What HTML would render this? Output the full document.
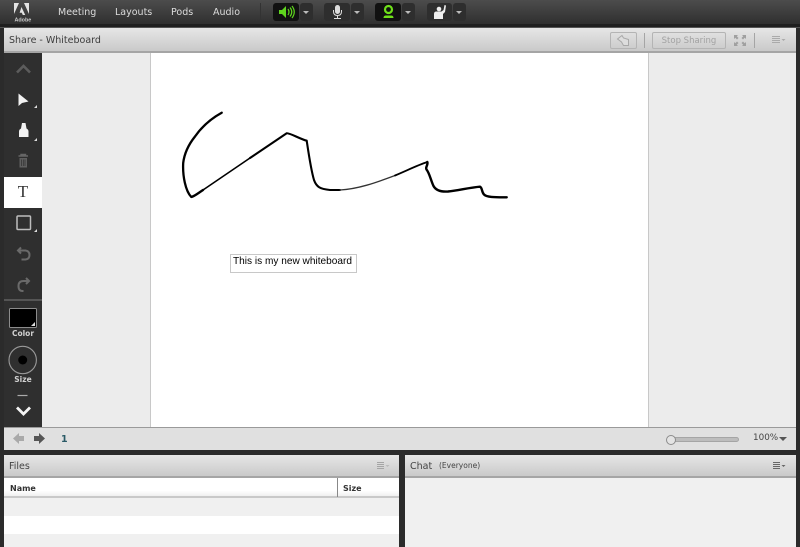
<!DOCTYPE html>
<html><head><meta charset="utf-8">
<style>
*{box-sizing:border-box}
html,body{margin:0;padding:0;width:800px;height:547px;overflow:hidden;background:#2b2b2b;font-family:"DejaVu Sans","Liberation Sans",sans-serif}
#w{position:absolute;left:0;top:0;width:800px;height:547px;overflow:hidden;filter:blur(.3px)}
.a{position:absolute}
.menu{position:absolute;top:6px;font-size:9.500px;line-height:13px;color:#dcdcdc;font-weight:400}
.hd{background:linear-gradient(#e6e6e6,#c9c9c9);border-bottom:2px solid #a5a5a5}
.btn{position:absolute;top:3px;height:18px;background:#2e2e2e;border-radius:3px}
</style></head><body><div id="w">
<div class="a" style="left:0;top:0;width:800px;height:547px;background:#2b2b2b"></div>
<div class="a" style="left:0;top:0;width:800px;height:24px;background:linear-gradient(#4c4c4c,#2f2f2f)"></div>
<div class="a" style="left:0;top:24px;width:800px;height:4px;background:#1f1f1f;border-bottom:1px solid #555"></div>

<svg class="a" style="left:12px;top:1px" width="20" height="22" viewBox="0 0 20 22">
<path d="M2 2h5L2 13zM17 2h-5l5 11zM9.500 6l3.700 8h-2.400l-1-2.200H7.600z" fill="#e4e4e4"/>
<text x="2.500" y="20.500" font-family="Liberation Sans" font-size="5.400" font-weight="bold" fill="#ccc">Adobe</text>
</svg>
<div class="menu" style="left:58px">Meeting</div>
<div class="menu" style="left:115px">Layouts</div>
<div class="menu" style="left:171px">Pods</div>
<div class="menu" style="left:213px">Audio</div>
<div class="a" style="left:260px;top:3px;width:1px;height:18px;background:#333"></div>

<div class="btn" style="left:273px;width:26px;background:#111"></div>
<div class="btn" style="left:300px;width:13px"></div>
<svg class="a" style="left:278px;top:4px" width="18" height="16" viewBox="0 0 18 16">
<path d="M1 6h3l4-4v12l-4-4H1z" fill="#5fd51e"/>
<path d="M10 5q2 3 0 6M12 3.500q3.500 4.500 0 9M14 2q4.500 6 0 12" fill="none" stroke="#5fd51e" stroke-width="1.200"/>
</svg>
<div class="a" style="left:303px;top:11px;border:3px solid transparent;border-top:3px solid #bbb;border-bottom:0"></div>

<div class="btn" style="left:324px;width:26px"></div>
<div class="btn" style="left:351px;width:13px"></div>
<svg class="a" style="left:331px;top:4px" width="13" height="16" viewBox="0 0 13 16">
<rect x="4" y="1" width="5" height="9" rx="2.500" fill="#ddd"/>
<path d="M2.500 6v1.500q0 4 4 4t4-4V6M6.500 11.500V14M3 14.500h7" fill="none" stroke="#ddd" stroke-width="1"/>
</svg>
<div class="a" style="left:354px;top:11px;border:3px solid transparent;border-top:3px solid #bbb;border-bottom:0"></div>

<div class="btn" style="left:375px;width:26px;background:#111"></div>
<div class="btn" style="left:402px;width:13px"></div>
<svg class="a" style="left:381px;top:4px" width="15" height="16" viewBox="0 0 15 16">
<circle cx="7.500" cy="5.500" r="3.500" fill="none" stroke="#6fe01a" stroke-width="2.200"/>
<path d="M2.500 14q0-2.500 2.500-2.500h5q2.500 0 2.500 2.500z" fill="#6fe01a"/>
</svg>
<div class="a" style="left:405px;top:11px;border:3px solid transparent;border-top:3px solid #bbb;border-bottom:0"></div>

<div class="btn" style="left:427px;width:25px"></div>
<div class="btn" style="left:453px;width:13px"></div>
<svg class="a" style="left:432px;top:4px" width="16" height="16" viewBox="0 0 16 16">
<circle cx="7" cy="5" r="2.300" fill="#eee"/>
<path d="M2 15V10q0-2.500 2.500-2.500h5l2-1.500 1-5 1.500.5-1 6.500-2 2V15z" fill="#eee"/>
</svg>
<div class="a" style="left:456px;top:11px;border:3px solid transparent;border-top:3px solid #bbb;border-bottom:0"></div>

<!-- Share pod -->
<div class="a hd" style="left:4px;top:28px;width:792px;height:25px"></div>
<div class="a" style="left:9px;top:34px;font-size:9.500px;line-height:14px;color:#3c3c3c">Share - Whiteboard</div>
<div class="a" style="left:610px;top:32px;width:27px;height:17px;border:1px solid #b4b4b4;border-radius:2px"></div>
<svg class="a" style="left:616px;top:34px" width="15" height="13" viewBox="0 0 15 13"><path d="M1.500 5L6 1.500l1.500 2.500 5 1.500v6h-5l-2-3.500z" fill="#ddd" stroke="#a8a8a8"/></svg>
<div class="a" style="left:644px;top:33px;width:1px;height:15px;background:#a5a5a5"></div>
<div class="a" style="left:652px;top:32px;width:74px;height:17px;border:1px solid #b4b4b4;border-radius:2px;text-align:center;font-size:8.500px;line-height:17px;color:#a2a2a2">Stop Sharing</div>
<svg class="a" style="left:733px;top:34px" width="14" height="13" viewBox="0 0 14 13"><path d="M1 1h4L3.800 2.300 5.500 4 4 5.500 2.300 3.800 1 5zM13 1H9l1.200 1.300L8.500 4 10 5.500l1.700-1.700L13 5zM1 12h4L3.800 10.700 5.500 9 4 7.500 2.300 9.200 1 8zM13 12H9l1.200-1.300L8.500 9 10 7.500l1.700 1.700L13 8z" fill="#a0a0a0"/></svg>
<div class="a" style="left:754px;top:33px;width:1px;height:15px;background:#a5a5a5"></div>
<svg class="a" style="left:772px;top:36px" width="14" height="9" viewBox="0 0 14 9"><path d="M0 .500h8M0 2.500h8M0 4.500h8M0 6.500h8" stroke="#aaa" stroke-width="1"/><path d="M9.500 3h4l-2 2z" fill="#aaa"/></svg>

<!-- Main area -->
<div class="a" style="left:42px;top:53px;width:754px;height:375px;background:#ececec"></div>
<div class="a" style="left:150px;top:53px;width:499px;height:374px;background:#fff;border-left:1px solid #c8c8c8;border-right:1px solid #c8c8c8"></div>
<div class="a" style="left:4px;top:427px;width:792px;height:1px;background:#9a9a9a"></div>

<!-- Toolbar -->
<div class="a" style="left:4px;top:53px;width:38px;height:374px;background:#2f2f2f"></div>
<svg class="a" style="left:4px;top:53px" width="38" height="374" viewBox="0 0 38 374">
<path d="M13 19.500l6.500-6.500 6.500 6.500" fill="none" stroke="#5c5c5c" stroke-width="2.600"/>
<path d="M14.500 40.500v12.500l3.500-3 6.500-1.500z" fill="#f2f2f2"/>
<path d="M30 55h3v-3z" fill="#ddd"/>
<path d="M18 70h3.500l1 5.500q2 1 2 3v5.500h-9.500v-5.500q0-2 2-3z" fill="#f2f2f2"/>
<path d="M30 88h3v-3z" fill="#ddd"/>
<path d="M14.500 103h9.500M17 103v-1.500h4.500v1.500" fill="none" stroke="#666" stroke-width="1.400"/>
<path d="M15.500 105h7.500v9.500h-7.500z" fill="#5f5f5f"/>
<path d="M17.500 106.500v6.500M19.300 106.500v6.500M21 106.500v6.500" fill="none" stroke="#2f2f2f" stroke-width=".7"/>
<rect x="13" y="163" width="13.500" height="13.500" rx="1" fill="none" stroke="#bdbdbd" stroke-width="1.500"/>
<path d="M30 179h3v-3z" fill="#ddd"/>
<path d="M17 194.500l-3 3 3 3M14.500 197.500h7q4 .5 4 4.500t-4 4.500h-4" fill="none" stroke="#6a6a6a" stroke-width="2"/>
<path d="M22 225l3 3-3 3M24.500 228h-5q-5 0-5 5t4 5h1" fill="none" stroke="#6a6a6a" stroke-width="2"/>
<rect x="0" y="246" width="38" height="2" fill="#555"/>
<path d="M13.500 342.500h10" stroke="#aaa" stroke-width="1.200"/>
<path d="M13 354.500l6.500 6.500 6.500-6.500" fill="none" stroke="#f4f4f4" stroke-width="2.800"/>
<rect x="5.500" y="255.500" width="27" height="19" rx="1" fill="#000" stroke="#8c8c8c"/>
<path d="M27 273h4v-4z" fill="#ddd"/>
<circle cx="18.700" cy="307" r="13.700" fill="none" stroke="#999" stroke-width="1.100"/>
<circle cx="18.700" cy="307" r="4.500" fill="#000"/>
</svg>
<div class="a" style="left:4px;top:177px;width:38px;height:31px;background:#fff;text-align:center;font-family:'Liberation Serif',serif;font-size:17px;line-height:30px;color:#333">T</div>
<div class="a" style="left:4px;top:329px;width:38px;text-align:center;font-size:7.500px;line-height:10px;color:#d0d0d0;font-weight:bold">Color</div>
<div class="a" style="left:4px;top:375px;width:38px;text-align:center;font-size:7.500px;line-height:10px;color:#d0d0d0;font-weight:bold">Size</div>

<!-- Drawing -->
<svg class="a" style="left:150px;top:53px" width="499" height="374" viewBox="150 53 499 374">
<g fill="none" stroke="#000" stroke-linecap="round" stroke-linejoin="round">
<path stroke-width="2.300" d="M221.700 112.700C212 118 203 125 195 136.500C189 144 184.500 152 183.200 163C182.500 176 185.500 191 191.300 197C194 196.500 197 194 203 190"/>
<path stroke-width="1.600" d="M203 190L250 158"/>
<path stroke-width="2.100" d="M250 158L286.700 133.300C289 132.500 300 139 306.700 140.700C309 156 311 170 314 180C316.500 187 320 189 330 190L340 190"/>
<path stroke-width="1.300" stroke="#333" d="M340 190C358 189 375 183 395 175.500"/>
<path stroke-width="1.800" d="M395 175.500C408 170 418 165 427.300 162"/>
<path stroke-width="2.400" d="M427.300 162C428.500 165 425 167 426.500 169.500C429.500 173 431 181 433.500 186C436 190.500 441 192 448 191.500C458 190.500 470 187.500 480 186.700C482.500 188 481.500 192 484 194.500C487 197.500 495 197.300 506.700 197.300"/>
</g>
</svg>
<div class="a" style="left:230px;top:254px;width:127px;height:19px;border:1px solid #c8c8c8;background:#fff;font-family:'Liberation Sans',sans-serif;font-size:10.100px;line-height:12px;padding:1px 0 0 2px;color:#000;white-space:nowrap">This is my new whiteboard</div>

<!-- Footer -->
<div class="a" style="left:4px;top:428px;width:792px;height:22px;background:#e0e0e0"></div>
<svg class="a" style="left:12px;top:432px" width="35" height="13" viewBox="0 0 35 13">
<path d="M1 6.500L7 1v3h5v5H7v3z" fill="#a9a9a9"/>
<path d="M33 6.500L27 1v3h-5v5h5v3z" fill="#555"/>
</svg>
<div class="a" style="left:61px;top:433px;font-size:9.500px;line-height:13px;color:#2a5a66;font-weight:bold">1</div>
<div class="a" style="left:670px;top:437px;width:69px;height:5px;background:#bdbdbd;border:1px solid #a5a5a5;border-radius:3px"></div>
<div class="a" style="left:666px;top:435px;width:10px;height:10px;background:#e4e4e4;border:1px solid #8c8c8c;border-radius:50%"></div>
<div class="a" style="left:753px;top:432px;font-size:8.800px;line-height:13px;color:#444">100%</div>
<div class="a" style="left:779px;top:437px;border:4px solid transparent;border-top:4px solid #555;border-bottom:0"></div>

<!-- Files -->
<div class="a hd" style="left:4px;top:455px;width:395px;height:23px"></div>
<div class="a" style="left:9px;top:460px;font-size:9.500px;line-height:13px;color:#444">Files</div>
<svg class="a" style="left:377px;top:462px" width="14" height="9" viewBox="0 0 14 9"><path d="M0 .500h7M0 2.500h7M0 4.500h7M0 6.500h7" stroke="#a5a5a5"/><path d="M8.500 3h4l-2 2z" fill="#bbb"/></svg>
<div class="a" style="left:4px;top:478px;width:395px;height:20px;background:linear-gradient(#fff 70%,#f0f0f0);border-bottom:2px solid #c9c9c9"></div>
<div class="a" style="left:337px;top:478px;width:1px;height:19px;background:#888"></div>
<div class="a" style="left:10px;top:482px;font-size:8px;line-height:13px;color:#333;font-weight:bold">Name</div>
<div class="a" style="left:343px;top:482px;font-size:8px;line-height:13px;color:#333;font-weight:bold">Size</div>
<div class="a" style="left:4px;top:498px;width:395px;height:18px;background:#f0f0f0"></div>
<div class="a" style="left:4px;top:516px;width:395px;height:18px;background:#fff"></div>
<div class="a" style="left:4px;top:534px;width:395px;height:13px;background:#f0f0f0"></div>

<!-- Chat -->
<div class="a hd" style="left:405px;top:455px;width:391px;height:23px"></div>
<div class="a" style="left:410px;top:460px;font-size:9.500px;line-height:13px;color:#444">Chat</div>
<div class="a" style="left:439px;top:460px;font-size:7.500px;line-height:11px;color:#444">(Everyone)</div>
<svg class="a" style="left:773px;top:462px" width="14" height="9" viewBox="0 0 14 9"><path d="M0 .500h7M0 2.500h7M0 4.500h7M0 6.500h7" stroke="#666"/><path d="M8.500 3h4l-2 2z" fill="#666"/></svg>
<div class="a" style="left:405px;top:478px;width:391px;height:69px;background:#f0f0f0"></div>
</div></body></html>
